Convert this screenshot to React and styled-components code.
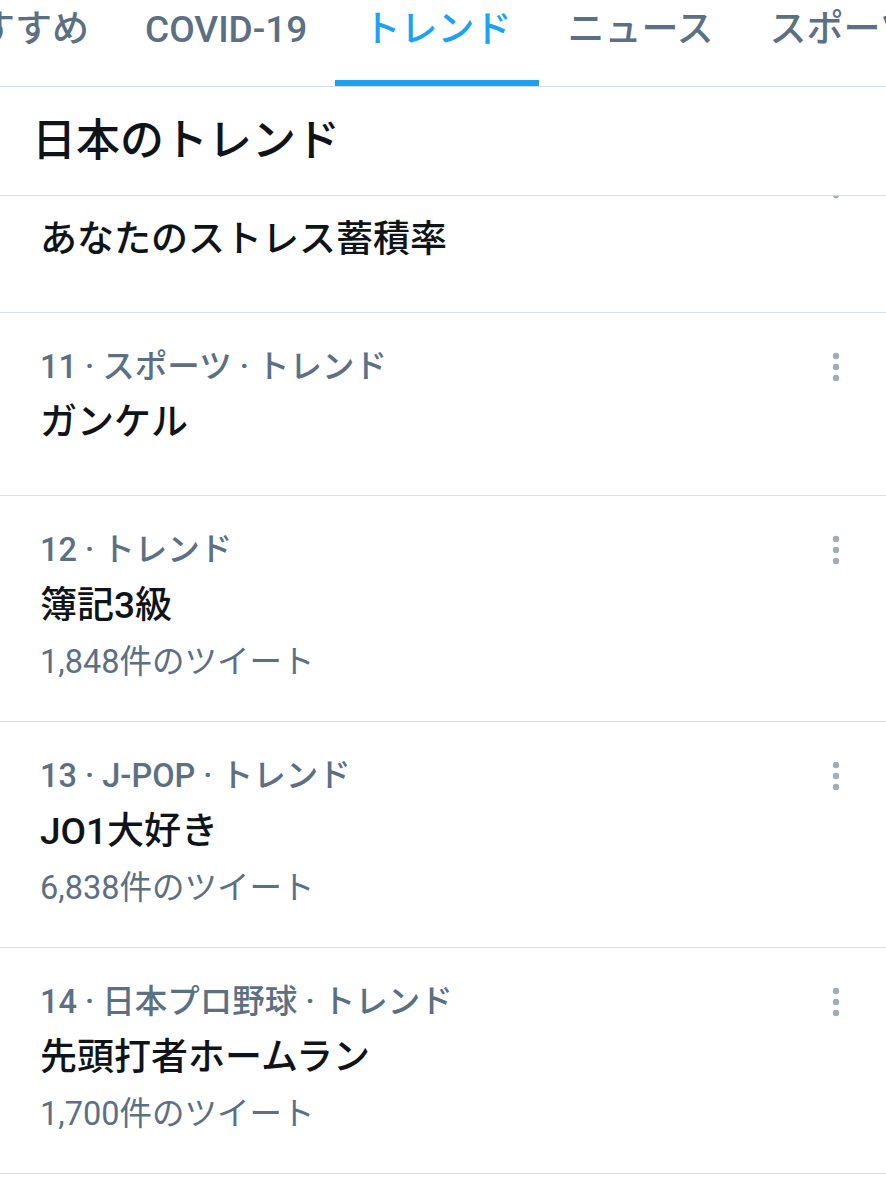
import React from "react";
import styled, { createGlobalStyle } from "styled-components";

const Global = createGlobalStyle`
  html, body { margin: 0; padding: 0; background: #ffffff; }
  body {
    font-family: Roboto, "Noto Sans CJK JP", "Noto Sans", sans-serif;
    color: #0f1419;
    overflow: hidden;
  }
`;

const Page = styled.div`
  width: 886px;
  height: 1200px;
  overflow: hidden;
  display: flex;
  flex-direction: column;
  background: #fff;
`;

const TabBar = styled.nav`
  height: 86px;
  border-bottom: 1px solid #d6dde3;
  overflow: hidden;
  flex-shrink: 0;
`;

const TabStrip = styled.div`
  display: flex;
  margin-left: -87px;
  height: 100%;
`;

const Tab = styled.div`
  display: flex;
  flex-direction: column;
  justify-content: space-between;
  align-items: stretch;
  flex-shrink: 0;
  height: 100%;
`;

const TabLabel = styled.span`
  display: block;
  padding: 0 28px;
  line-height: 60px;
  font-size: 37px;
  font-weight: 500;
  white-space: nowrap;
  color: ${(p) => (p.$active ? "#1da1f2" : "#5b7083")};
`;

const TabIndicator = styled.span`
  display: block;
  height: 6px;
  background: ${(p) => (p.$active ? "#1da1f2" : "transparent")};
`;

const SectionHeader = styled.header`
  height: 108px;
  display: flex;
  align-items: center;
  padding-left: 32px;
  border-bottom: 1px solid #d6dde3;
  flex-shrink: 0;
`;

const HeaderTitle = styled.h2`
  margin: 0;
  font-size: 44px;
  line-height: 56px;
  font-weight: 500;
  color: #0f1419;
`;

const ListViewport = styled.div`
  flex: 1;
  overflow: hidden;
`;

const List = styled.div`
  margin-top: -66px;
`;

const Row = styled.div`
  display: flex;
  align-items: flex-start;
  padding: 34px 38px ${(p) => (p.$hasCount ? "39px" : "50px")} 40px;
  border-bottom: 1px solid #d6dde3;
`;

const RowBody = styled.div`
  flex: 1;
  min-width: 0;
`;

const Meta = styled.div`
  font-size: 32.5px;
  line-height: 40px;
  font-weight: 500;
  color: #5b7083;
  white-space: nowrap;
`;

const Title = styled.div`
  margin-top: 14px;
  font-size: 37px;
  line-height: 44px;
  font-weight: 500;
  color: #0f1419;
  white-space: nowrap;
`;

const Count = styled.div`
  margin-top: 14px;
  font-size: 32.5px;
  line-height: 40px;
  font-weight: 400;
  color: #5b7083;
  white-space: nowrap;
`;

const MoreButton = styled.button`
  border: 0;
  background: none;
  padding: 0;
  width: 24px;
  height: 40px;
  display: flex;
  align-items: center;
  justify-content: center;
  color: #9fadb9;
`;

const MoreIcon = () => (
  <svg width="12" height="36" viewBox="0 0 12 36" fill="currentColor">
    <circle cx="6" cy="7" r="3.2" />
    <circle cx="6" cy="18" r="3.2" />
    <circle cx="6" cy="29" r="3.2" />
  </svg>
);

const tabs = ["おすすめ", "COVID-19", "トレンド", "ニュース", "スポーツ", "エンタメ"];

const trends = [
  { meta: "10 · トレンド", title: "あなたのストレス蓄積率" },
  { meta: "11 · スポーツ · トレンド", title: "ガンケル" },
  { meta: "12 · トレンド", title: "簿記3級", count: "1,848件のツイート" },
  { meta: "13 · J-POP · トレンド", title: "JO1大好き", count: "6,838件のツイート" },
  { meta: "14 · 日本プロ野球 · トレンド", title: "先頭打者ホームラン", count: "1,700件のツイート" },
  { meta: "15 · トレンド", title: "秋の夜長", count: "2,105件のツイート" },
];

export default function App() {
  return (
    <Page>
      <Global />
      <TabBar>
        <TabStrip>
          {tabs.map((t) => {
            const active = t === "トレンド";
            return (
              <Tab key={t}>
                <TabLabel $active={active}>{t}</TabLabel>
                <TabIndicator $active={active} />
              </Tab>
            );
          })}
        </TabStrip>
      </TabBar>
      <SectionHeader>
        <HeaderTitle>日本のトレンド</HeaderTitle>
      </SectionHeader>
      <ListViewport>
        <List>
          {trends.map((tr) => (
            <Row key={tr.meta} $hasCount={!!tr.count}>
              <RowBody>
                <Meta>{tr.meta}</Meta>
                <Title>{tr.title}</Title>
                {tr.count && <Count>{tr.count}</Count>}
              </RowBody>
              <MoreButton aria-label="その他">
                <MoreIcon />
              </MoreButton>
            </Row>
          ))}
        </List>
      </ListViewport>
    </Page>
  );
}
